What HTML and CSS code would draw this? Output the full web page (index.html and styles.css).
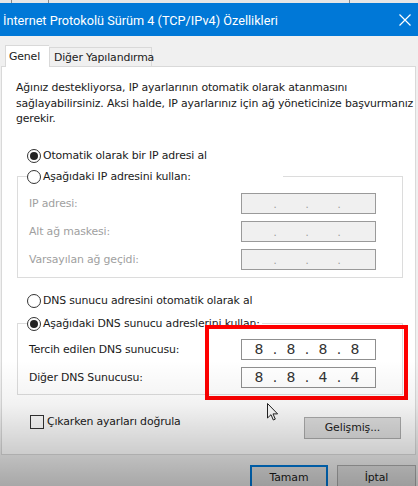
FILE: index.html
```html
<!DOCTYPE html>
<html lang="tr">
<head>
<meta charset="utf-8">
<title>İnternet Protokolü Sürüm 4 (TCP/IPv4) Özellikleri</title>
<link rel="stylesheet" href="styles.css">
</head>
<body>
<div class="window">
  <div class="topstrip"><span class="s1"></span><span class="s2"></span><span class="s3"></span></div>
  <div class="titlebar">
    <span class="title">İnternet Protokolü Sürüm 4 (TCP/IPv4) Özellikleri</span>
    <svg class="close" width="12" height="12" viewBox="0 0 12 12"><path d="M0.5 0.5 L11.5 11.5 M11.5 0.5 L0.5 11.5" stroke="#fff" stroke-width="1.2" fill="none"/></svg>
  </div>
  <div class="body">
    <div class="tabs">
      <div class="tab active">Genel</div>
      <div class="tab">Diğer Yapılandırma</div>
    </div>
    <div class="panel">
      <p class="intro">Ağınız destekliyorsa, IP ayarlarının otomatik olarak atanmasını sağlayabilirsiniz. Aksi halde, IP ayarlarınız için ağ yöneticinize başvurmanız gerekir.</p>

      <div class="radio-row r1"><span class="radio checked"></span><span>Otomatik olarak bir IP adresi al</span></div>

      <fieldset class="group g1">
        <legend class="leg1"><span class="radio"></span><span>Aşağıdaki IP adresini kullan:</span></legend>
        <div class="row disabled"><span class="label">IP adresi:</span><div class="ipfield empty"><span></span><i>.</i><span></span><i>.</i><span></span><i>.</i><span></span></div></div>
        <div class="row disabled"><span class="label">Alt ağ maskesi:</span><div class="ipfield empty"><span></span><i>.</i><span></span><i>.</i><span></span><i>.</i><span></span></div></div>
        <div class="row disabled"><span class="label">Varsayılan ağ geçidi:</span><div class="ipfield empty"><span></span><i>.</i><span></span><i>.</i><span></span><i>.</i><span></span></div></div>
      </fieldset>

      <div class="radio-row r3"><span class="radio"></span><span>DNS sunucu adresini otomatik olarak al</span></div>

      <fieldset class="group g2">
        <legend class="leg2"><span class="radio checked"></span><span>Aşağıdaki DNS sunucu adreslerini kullan:</span></legend>
        <div class="row"><span class="label">Tercih edilen DNS sunucusu:</span><div class="ipfield filled"><span>8</span><i>.</i><span>8</span><i>.</i><span>8</span><i>.</i><span>8</span></div></div>
        <div class="row"><span class="label">Diğer DNS Sunucusu:</span><div class="ipfield filled"><span>8</span><i>.</i><span>8</span><i>.</i><span>4</span><i>.</i><span>4</span></div></div>
      </fieldset>

      <div class="bottom-row">
        <label class="check"><span class="box"></span><span>Çıkarken ayarları doğrula</span></label>
        <button class="btn adv">Gelişmiş...</button>
      </div>
    </div>
    <div class="actions">
      <button class="btn ok">Tamam</button>
      <button class="btn cancel">İptal</button>
    </div>
  </div>
  <div class="highlight"></div>
  <svg class="cursor" width="12" height="18" viewBox="0 0 12 18"><path d="M0.5 0.5 L0.5 15 L4 11.7 L6.3 17 L8.3 16.1 L6 10.9 L10.6 10.9 Z" fill="#fff" stroke="#222" stroke-width="1" stroke-linejoin="round"/></svg>
  <div class="shade"></div>
</div>
</body>
</html>
```

FILE: styles.css
```css
* { box-sizing: border-box; }
html, body { margin: 0; padding: 0; }
body {
  width: 418px;
  height: 486px;
  overflow: hidden;
  background: #f0f0f0;
  font-family: "DejaVu Sans", "Noto Sans", sans-serif;
  font-size: 10.9px;
  letter-spacing: -0.15px;
  color: #1a1a1a;
}
.window { position: relative; width: 418px; height: 486px; overflow: hidden; }

.topstrip {
  height: 3px;
  background: #e6e6e6;
  display: flex;
}
.topstrip span { width: 1px; height: 3px; background: #8a8a8a; }
.topstrip .s1 { margin-left: 11px; }
.topstrip .s2 { margin-left: 36px; }
.topstrip .s3 { margin-left: 300px; }

.titlebar {
  height: 33px;
  background: #0078d7;
  color: #fff;
  display: flex;
  align-items: center;
  padding: 0 6px 0 3px;
  justify-content: space-between;
}
.title {
  font-family: Roboto, "Noto Sans", sans-serif;
  font-size: 12.7px;
  letter-spacing: 0;
  padding-top: 1px;
  white-space: nowrap;
}
.close { margin-right: 1px; }

.body { padding: 8px 2px 0 1px; }

.tabs { display: flex; align-items: flex-end; height: 22px; padding-left: 4px; }
.tab {
  height: 19px;
  border: 1px solid #d9d9d9;
  border-bottom: none;
  background: #f0f0f0;
  display: flex;
  align-items: center;
  white-space: nowrap;
}
.tab.active {
  height: 22px;
  background: #fff;
  padding: 0 0 0 3px;
  position: relative;
  z-index: 1;
  margin-bottom: -1px;
  border-right: none;
  width: 44px;
}
.tab:not(.active) { width: 103px; padding-left: 4px; }

.panel {
  background: #fff;
  border: 1px solid #d9d9d9;
  height: 389px;
}

.intro {
  margin: 13px 0 0 14px;
  line-height: 15.5px;
}

.radio-row, .group legend { display: flex; align-items: center; height: 16px; }
.radio-row { margin-left: 25px; }
.r1 { margin-top: 21px; }
.r3 { margin-top: 15px; }

.radio {
  width: 14px;
  height: 14px;
  border: 1px solid #333;
  border-radius: 50%;
  margin-right: 2px;
  display: inline-flex;
  align-items: center;
  justify-content: center;
  background: #fff;
  flex: none;
}
.radio.checked::after {
  content: "";
  width: 8px;
  height: 8px;
  border-radius: 50%;
  background: #222;
}

.group {
  margin: 5px 0 0 15px;
  width: 386px;
  border: 1px solid #dcdcdc;
  padding: 0 26px 7px 11px;
}
.group legend {
  padding: 0 2px 0 0;
  margin-left: -2px;
  background: #fff;
}
.leg1 { width: 256px; }
.g2 { margin-top: 7px; padding-bottom: 6px; }

.row {
  display: flex;
  justify-content: space-between;
  align-items: center;
  height: 21px;
  margin-top: 7px;
}
.g1 .row:first-of-type { margin-top: 8px; }
.disabled .label { color: #a0a0a0; }

.ipfield {
  width: 135px;
  height: 21px;
  border: 1px solid #8f8f8f;
  display: grid;
  grid-template-columns: 26px 6px 26px 6px 26px 6px 26px;
  padding-left: 4px;
  align-items: center;
  letter-spacing: 0;
}
.ipfield span, .ipfield i { text-align: center; font-style: normal; }
.ipfield.empty { background: #f0f0f0; border-color: #9a9a9a; }
.ipfield.empty i { color: #999; font-size: 10px; padding-top: 2px; }
.ipfield.filled { background: #fff; font-size: 14px; color: #333; font-family: "DejaVu Sans", sans-serif; }

.bottom-row {
  display: flex;
  justify-content: space-between;
  align-items: flex-start;
  margin-top: 20px;
  padding: 0 14px 0 28px;
}
.check { display: flex; align-items: center; height: 14px; }
.box {
  width: 14px;
  height: 14px;
  border: 1px solid #333;
  background: #fff;
  margin-right: 3px;
}
.btn {
  font-family: "DejaVu Sans", "Noto Sans", sans-serif;
  font-size: 10.9px;
  letter-spacing: -0.1px;
  color: #1a1a1a;
  background: #e1e1e1;
  border: 1px solid #adadad;
  padding: 0;
  height: 22px;
}
.adv { width: 97px; margin-top: 2px; }

.actions {
  display: flex;
  justify-content: flex-end;
  gap: 9px;
  margin-top: 10px;
}
.ok { width: 78px; height: 24px; border: 2px solid #0078d7; }
.cancel { width: 79px; height: 24px; }

.highlight {
  position: absolute;
  left: 205px;
  top: 325px;
  width: 203px;
  height: 75px;
  border: 4px solid #ff0000;
  pointer-events: none;
}
.cursor { position: absolute; left: 267px; top: 403px; }
.shade {
  position: absolute;
  left: 0; right: 0;
  top: 360px; bottom: 0;
  background: linear-gradient(to bottom, rgba(0,0,0,0) 0%, rgba(0,0,0,0.05) 35%, rgba(0,0,0,0.2) 75%, rgba(0,0,0,0.3) 100%);
  pointer-events: none;
}
```
